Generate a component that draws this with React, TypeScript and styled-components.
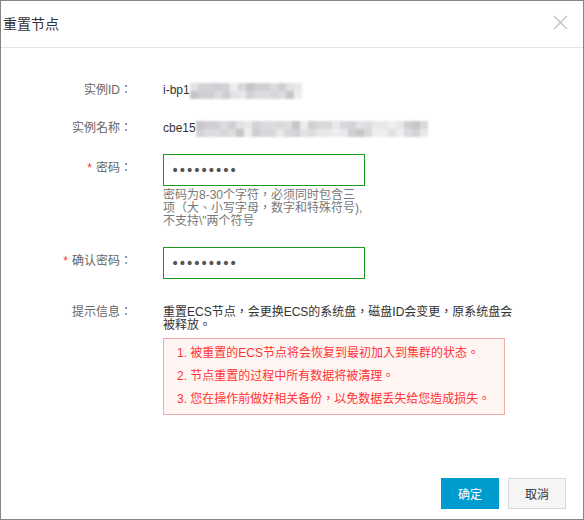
import { FC } from 'react'
import styled, { createGlobalStyle } from 'styled-components'

const GlobalStyle = createGlobalStyle`
  html, body {
    margin: 0;
    padding: 0;
    background: #fff;
  }
  body {
    font-family: 'Liberation Sans', 'Noto Sans CJK TC', 'Noto Sans CJK SC', sans-serif;
    font-size: 12px;
    color: #333;
  }
`

const Dialog = styled.div`
  box-sizing: border-box;
  width: 584px;
  height: 520px;
  border: 1px solid #858585;
  display: flex;
  flex-direction: column;
  background: #fff;
`

const Header = styled.div`
  height: 46px;
  border-bottom: 1px solid #e3e3e3;
  display: flex;
  align-items: center;
  justify-content: space-between;
  padding: 0 15px 0 2px;
`

const Title = styled.div`
  font-size: 14px;
  color: #333;
  line-height: 20px;
`

const CloseBtn = styled.button`
  border: 0;
  background: none;
  padding: 0;
  width: 15px;
  height: 15px;
  margin-top: -4px;
  cursor: pointer;
  display: flex;
`

const Body = styled.div`
  flex: 1;
  padding-top: 32px;
`

const Row = styled.div<{ $mb?: number }>`
  display: flex;
  align-items: flex-start;
  margin-bottom: ${(p) => p.$mb ?? 0}px;
`

const Label = styled.div<{ $pt?: number }>`
  width: 131px;
  flex-shrink: 0;
  text-align: right;
  color: #666;
  line-height: 20px;
  padding-top: ${(p) => p.$pt ?? 0}px;
`

const Star = styled.span`
  color: #f33;
  margin-right: 4px;
`

const Field = styled.div`
  margin-left: 31px;
  display: flex;
  flex-direction: column;
`

const Value = styled.div`
  line-height: 20px;
  color: #333;
  display: flex;
  align-items: center;
`

const Mosaic = styled.div`
  display: flex;
  flex-direction: column;
  filter: blur(0.8px);
  margin-top: 1px;
`

const MosaicRow = styled.div`
  display: flex;
`

const Cell = styled.span<{ $c: string }>`
  width: 8px;
  height: 8px;
  background: ${(p) => p.$c};
`

const PwdInput = styled.input`
  box-sizing: border-box;
  width: 202px;
  height: 32px;
  border: 1px solid #1a9a1a;
  outline: none;
  padding: 0 7px;
  font-family: 'DejaVu Sans', sans-serif;
  font-size: 14px;
  letter-spacing: -1px;
  color: #555;
  background: #fff;
`

const Help = styled.div`
  width: 200px;
  margin-top: 3px;
  color: #777;
  line-height: 13px;
`

const HintText = styled.div`
  width: 352px;
  padding-top: 4px;
  line-height: 13px;
  color: #333;
`

const Alert = styled.ol`
  box-sizing: border-box;
  width: 342px;
  margin: 6px 0 0;
  padding: 3px 0 3px 13px;
  list-style: none;
  border: 1px solid #f4aaa6;
  background: #fff6f4;
`

const AlertItem = styled.li`
  color: #f33;
  line-height: 23px;
`

const Footer = styled.div`
  display: flex;
  justify-content: flex-end;
  gap: 9px;
  padding: 0 17px 10px 0;
`

const Button = styled.button<{ $primary?: boolean }>`
  box-sizing: border-box;
  width: 58px;
  height: 31px;
  font-family: inherit;
  font-size: 12px;
  cursor: pointer;
  border: 1px solid ${(p) => (p.$primary ? '#009ccf' : '#d9d9d9')};
  background: ${(p) => (p.$primary ? '#009ccf' : '#f5f5f5')};
  color: ${(p) => (p.$primary ? '#fff' : '#333')};
`

const palette = ['#d8d8db', '#e2e2e5', '#cfcfd3', '#e8e8ea', '#c9c4c6', '#dcdcdf', '#eeeeef', '#d3d2d6']

const Redacted: FC<{ cols: number; seed: number }> = ({ cols, seed }) => {
  const rows = [0, 1]
  return (
    <Mosaic>
      {rows.map((r) => (
        <MosaicRow key={r}>
          {Array.from({ length: cols }).map((_, i) => (
            <Cell key={i} $c={palette[(i * 5 + r * 3 + seed + ((i * i) % 7)) % palette.length]} />
          ))}
        </MosaicRow>
      ))}
    </Mosaic>
  )
}

export default function App() {
  return (
    <>
      <GlobalStyle />
      <Dialog>
        <Header>
          <Title>重置节点</Title>
          <CloseBtn aria-label="close">
            <svg width="15" height="15" viewBox="0 0 15 15">
              <path d="M1 1 L14 14 M14 1 L1 14" stroke="#c8c8c8" strokeWidth="1.6" />
            </svg>
          </CloseBtn>
        </Header>
        <Body>
          <Row $mb={18}>
            <Label>实例ID：</Label>
            <Field>
              <Value>
                i-bp1
                <Redacted cols={14} seed={1} />
              </Value>
            </Field>
          </Row>
          <Row $mb={16}>
            <Label>实例名称：</Label>
            <Field>
              <Value>
                cbe15
                <Redacted cols={29} seed={4} />
              </Value>
            </Field>
          </Row>
          <Row $mb={19}>
            <Label $pt={4}>
              <Star>*</Star>密码：
            </Label>
            <Field>
              <PwdInput type="password" defaultValue="abcdefghi" readOnly />
              <Help>
                密码为8-30个字符，必须同时包含三项（大、小写字母，数字和特殊符号),不支持\"两个符号
              </Help>
            </Field>
          </Row>
          <Row $mb={23}>
            <Label $pt={4}>
              <Star>*</Star>确认密码：
            </Label>
            <Field>
              <PwdInput type="password" defaultValue="abcdefghi" readOnly />
            </Field>
          </Row>
          <Row>
            <Label>提示信息：</Label>
            <Field>
              <HintText>重置ECS节点，会更换ECS的系统盘，磁盘ID会变更，原系统盘会被释放。</HintText>
              <Alert>
                <AlertItem>1. 被重置的ECS节点将会恢复到最初加入到集群的状态。</AlertItem>
                <AlertItem>2. 节点重置的过程中所有数据将被清理。</AlertItem>
                <AlertItem>3. 您在操作前做好相关备份，以免数据丢失给您造成损失。</AlertItem>
              </Alert>
            </Field>
          </Row>
        </Body>
        <Footer>
          <Button $primary>确定</Button>
          <Button>取消</Button>
        </Footer>
      </Dialog>
    </>
  )
}
